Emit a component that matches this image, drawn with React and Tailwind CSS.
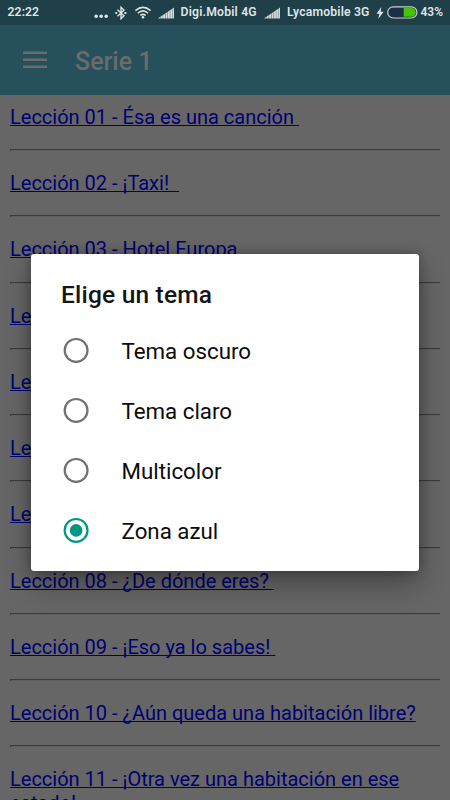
const lessons = [
  'Lección 01 - Ésa es una canción ',
  'Lección 02 - ¡Taxi!  ',
  'Lección 03 - Hotel Europa',
  'Lección 04 - ¿Tiene usted un plano?',
  'Lección 05 - En la cafetería',
  'Lección 06 - ¿Dónde está?',
  'Lección 07 - De compras',
  'Lección 08 - ¿De dónde eres? ',
  'Lección 09 - ¡Eso ya lo sabes! ',
  'Lección 10 - ¿Aún queda una habitación libre?',
  'Lección 11 - ¡Otra vez una habitación en ese\nestado!',
];

const themes = ['Tema oscuro', 'Tema claro', 'Multicolor', 'Zona azul'];

function Signal({ className }) {
  return (
    <svg className={`h-[12px] w-[17px] shrink-0 ${className}`} viewBox="0 0 17 12" fill="#d3d9db">
      <path d="M0 11.5 2.5 9.6V11.5Z" />
      <path d="M2.7 9.5 4.8 8.1V11.5H2.7Z" />
      <path d="M5.1 7.9 7.2 6.5V11.5H5.1Z" />
      <path d="M7.5 6.3 9.6 4.9V11.5H7.5Z" />
      <path d="M9.9 4.7 11.9 3.3V11.5H9.9Z" />
      <path d="M12.2 3.1 14 1.9V11.5H12.2Z" />
      <path d="M14.3 1.7 16 .5V11.5H14.3Z" />
    </svg>
  );
}

function StatusBar() {
  return (
    <div className="flex h-[25px] items-center bg-[#1f3f49] pl-[7.5px] text-[12.2px] leading-[25px] font-semibold whitespace-pre text-[#dfe4e6]">
      <span className="w-[86.5px] tracking-[0.1px]">22:22</span>
      <svg className="mt-[7px] h-[5px] w-[14px] shrink-0" viewBox="0 0 14 5" fill="#dfe4e6">
        <circle cx="2.2" cy="2.3" r="1.8" />
        <circle cx="7.2" cy="2.3" r="1.8" />
        <circle cx="12.2" cy="2.3" r="1.8" />
      </svg>
      <svg className="ml-[7px] h-[14px] w-[12px] shrink-0" viewBox="0 0 12 14" fill="none" stroke="#dfe4e6" strokeWidth="1.4">
        <path d="M2.5 3.8 9 9.8 6 12.7V1.3L9 4.2 2.5 10.2" />
        <path d="M.4 7H2.2M9.4 7H11.4" strokeWidth="1.8" />
      </svg>
      <svg className="ml-[6.5px] h-[13px] w-[18px] shrink-0" viewBox="0 0 18 13" fill="none" stroke="#dfe4e6" strokeWidth="1.5">
        <path d="M1.4 4.6Q9-1.8 16.6 4.6" />
        <path d="M3.8 7.2Q9 2.6 14.2 7.2" />
        <path d="M6.3 9.5Q9 7.2 11.7 9.5" />
        <circle cx="9" cy="11.3" r="1.3" fill="#dfe4e6" stroke="none" />
      </svg>
      <Signal className="ml-[6.5px]" />
      <span className="ml-[5.5px] w-[77px] tracking-[0.2px]">Digi.Mobil 4G</span>
      <Signal className="ml-[6.5px]" />
      <span className="ml-[6px] w-[83px] tracking-[0.18px]">Lycamobile 3G</span>
      <svg className="ml-[6px] h-[12px] w-[8px] shrink-0" viewBox="0 0 8 12" fill="#dfe4e6">
        <path d="M5.4 0 .5 6.8H3.4L2.2 12 7.6 4.8H4.6Z" />
      </svg>
      <svg className="ml-[2.5px] h-[13px] w-[31px] shrink-0" viewBox="0 0 31 13">
        <rect x=".7" y=".8" width="29.2" height="11.2" rx="5.6" fill="#1d2f43" stroke="#c9cfdd" strokeWidth="1.2" />
        <path d="M16.7 2H24.4A4.4 4.4 0 0 1 24.4 10.8H16.7Z" fill="#45c308" />
      </svg>
      <span className="ml-[3px] text-[12px]">43%</span>
    </div>
  );
}

function Dialog() {
  return (
    <div className="absolute top-[254px] left-[31px] h-[316.5px] w-[388px] rounded-[3px] bg-white pl-[31px] shadow-[0_14px_28px_rgba(0,0,0,0.3),0_0_12px_rgba(0,0,0,0.3)]">
      <h2 className="mt-[24px] -ml-px text-[24.5px] leading-[34px] font-medium tracking-[0.2px] whitespace-nowrap text-[#151515]">
        Elige un tema
      </h2>
      <ul className="mt-[9px]">
        {themes.map((theme) => {
          const selected = theme === 'Zona azul';
          return (
            <li key={theme} className="flex h-[60px] items-center">
              <svg className="h-[28px] w-[28px]" viewBox="0 0 28 28" fill="none">
                <circle cx="14.1" cy="13.4" r="11.4" stroke={selected ? '#009688' : '#717171'} strokeWidth="2.2" />
                {selected && <circle cx="14.1" cy="13.4" r="6.3" fill="#009688" />}
              </svg>
              <span className="ml-[31.5px] text-[22.3px] leading-[28px] whitespace-nowrap text-[#0c0c0c]">{theme}</span>
            </li>
          );
        })}
      </ul>
    </div>
  );
}

export default function App() {
  return (
    <div className="relative h-[800px] w-[450px] overflow-hidden bg-[#666666] font-[Roboto,sans-serif]">
      <StatusBar />
      <header className="flex h-[70px] items-center bg-[#27505d] pl-[23px]">
        <svg className="h-[18px] w-[24px]" viewBox="0 0 24 18" fill="#6b6b6b">
          <path d="M0 .6H24V3H0ZM0 7.6H24V10H0ZM0 14.6H24V17H0Z" />
        </svg>
        <h1 className="mt-[4px] ml-[28px] text-[25px] leading-[30px] font-medium text-[#6b6b6b]">Serie 1</h1>
      </header>
      <ul className="px-[10px]">
        {lessons.map((lesson) => (
          <li key={lesson} className="h-[66.25px] pt-[10.8px]">
            <a className="block text-[20px] leading-[23.4px] whitespace-pre text-[#000074] underline decoration-1 underline-offset-1 [text-decoration-skip-ink:none]">
              {lesson}
            </a>
            {!lesson.startsWith('Lección 11') && (
              <hr className="mt-[19.8px] h-[2px] border-t border-b-0 border-l border-t-[#3b3b3b] border-l-[#3b3b3b] bg-[#606060]" />
            )}
          </li>
        ))}
      </ul>
      <Dialog />
    </div>
  );
}
